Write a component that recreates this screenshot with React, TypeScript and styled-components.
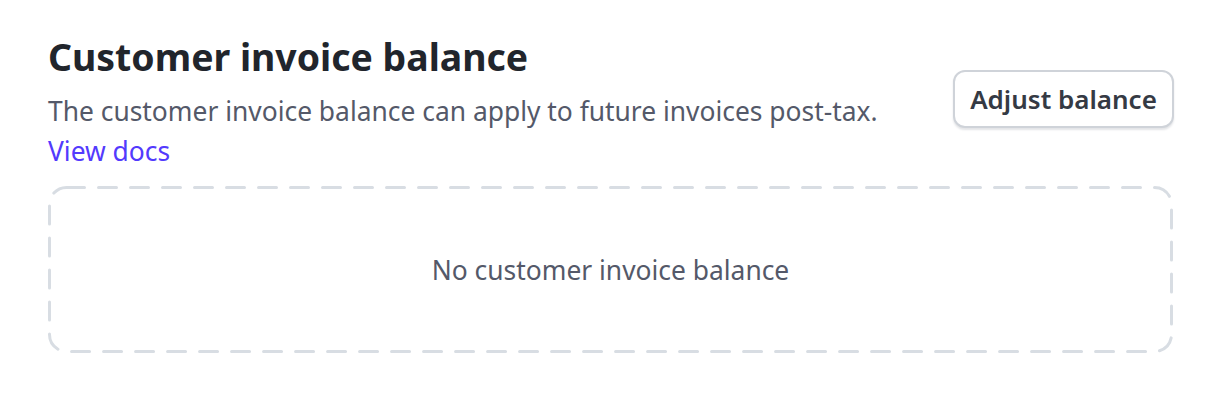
import { createGlobalStyle, styled } from "styled-components";

const GlobalStyle = createGlobalStyle`
  body {
    margin: 0;
    background: #ffffff;
    font-family: "Noto Sans", "Open Sans", sans-serif;
  }
`;

const Page = styled.section`
  padding: 31px 46px 0 48px;
`;

const Header = styled.div`
  display: flex;
  justify-content: space-between;
  align-items: flex-start;
  gap: 24px;
`;

const Intro = styled.div`
  display: flex;
  flex-direction: column;
`;

const Title = styled.h2`
  margin: 0 0 8px;
  font-size: 37.4px;
  line-height: 52px;
  font-weight: 700;
  color: #21252c;
`;

const Description = styled.p`
  margin: 0;
  font-size: 26.4px;
  line-height: 40px;
  color: #545969;
`;

const DocsLink = styled.a`
  font-size: 26.4px;
  line-height: 40px;
  color: #533afd;
  text-decoration: none;
`;

const Button = styled.button`
  margin-top: 39px;
  width: 221px;
  height: 58px;
  padding: 0;
  border: 2px solid #cfd3d9;
  border-radius: 12px;
  background: #ffffff;
  box-shadow: 0 2px 2px rgba(60, 66, 87, 0.14);
  font-family: inherit;
  font-size: 26px;
  font-weight: 600;
  color: #353a44;
  cursor: pointer;
`;

const BOX_W = 1125;
const BOX_H = 167;

const dashedFrame = encodeURIComponent(
  `<svg xmlns="http://www.w3.org/2000/svg" width="${BOX_W}" height="${BOX_H}">` +
    `<rect x="1.5" y="1.5" width="${BOX_W - 3}" height="${BOX_H - 3}" rx="17" ry="17" ` +
    `fill="none" stroke="#d8dde3" stroke-width="3" stroke-dasharray="18 14" stroke-linecap="round"/></svg>`
);

const EmptyState = styled.div`
  display: flex;
  align-items: center;
  justify-content: center;
  box-sizing: border-box;
  width: ${BOX_W}px;
  height: ${BOX_H}px;
  margin-top: 15px;
  background: url("data:image/svg+xml,${dashedFrame}") no-repeat;
  font-size: 26.4px;
  color: #545969;
`;

export default function App() {
  return (
    <>
      <GlobalStyle />
      <Page>
        <Header>
          <Intro>
            <Title>Customer invoice balance</Title>
            <Description>
              The customer invoice balance can apply to future invoices post-tax.
            </Description>
            <DocsLink href="#">View docs</DocsLink>
          </Intro>
          <Button>Adjust balance</Button>
        </Header>
        <EmptyState>No customer invoice balance</EmptyState>
      </Page>
    </>
  );
}
